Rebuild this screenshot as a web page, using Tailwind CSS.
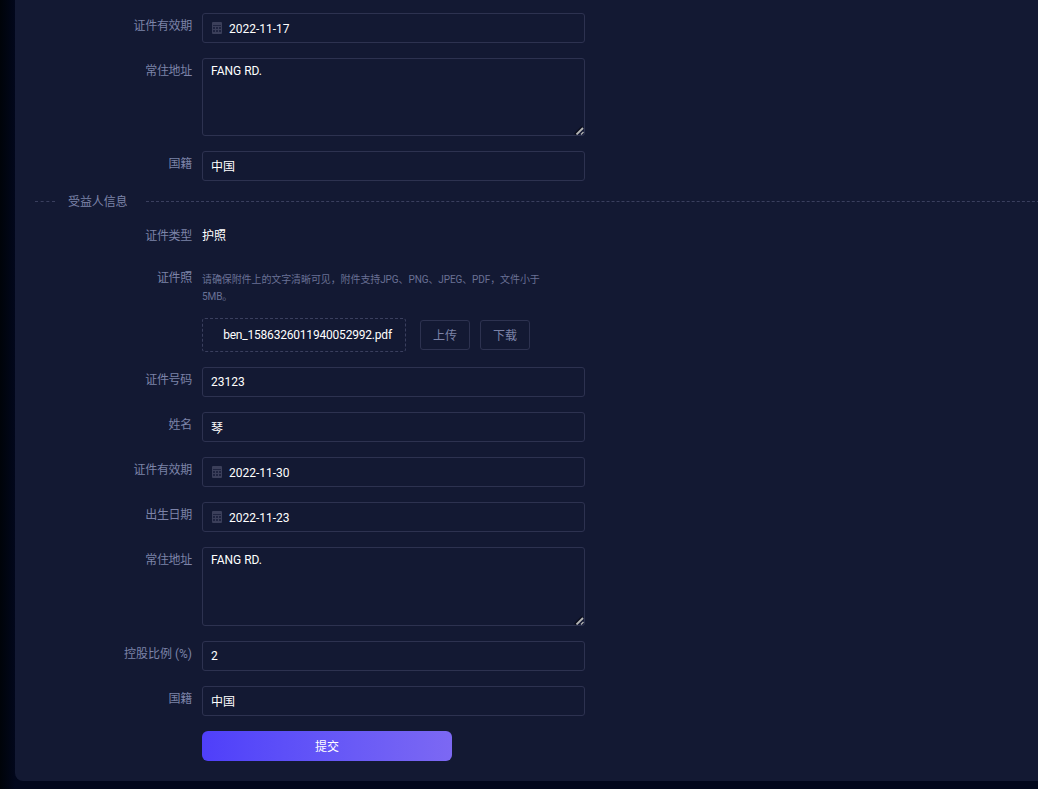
<!DOCTYPE html>
<html lang="en">
  <head>
    <meta charset="UTF-8" />
    <title>受益人信息</title>
    <script src="https://cdn.jsdelivr.net/npm/@tailwindcss/browser@4"></script>
  </head>
  <body class="bg-[#01051a] overflow-hidden font-['Roboto','Noto_Sans_CJK_SC',sans-serif]">
    <div class="h-[789px] w-[1038px] overflow-hidden bg-gradient-to-r from-[#000309] to-[#02071c] to-[15px]">
      <div class="ml-[15px] h-[781px] w-[1100px] rounded-bl-lg bg-[#131933] pt-[13px] text-xs">
        <!-- 企业信息 tail -->
        <div class="flex mb-[15px]">
          <label class="w-[177px] pt-[4px] text-right leading-[18px] tracking-[-0.3px] text-[#7c83a8]">证件有效期</label>
          <div class="ml-[10px] flex h-[30px] w-[383px] items-center rounded-[3px] border border-[#2d3250] pl-[8px] text-white">
            <svg class="h-3 w-3 mr-[6px]" viewBox="0 0 12 12"><rect x="1" y="0" width="10" height="12" rx="1" fill="#3b3f5a"/><path d="M2 3h8v1H2z" fill="#1f2440"/><path d="M2 5h2v2H2zM5 5h2v2H5zM8 5h2v2H8zM2 8h2v2H2zM5 8h2v2H5zM8 8h2v2H8z" fill="#1f2440"/></svg>
            <span class="pt-[2px]">2022-11-17</span>
          </div>
        </div>
        <div class="flex mb-[15px]">
          <label class="w-[177px] pt-[4px] text-right leading-[18px] tracking-[-0.3px] text-[#7c83a8]">常住地址</label>
          <div class="relative ml-[10px] h-[78px] w-[383px]">
            <textarea class="block h-full w-full resize-none rounded-[3px] border border-[#2d3250] bg-transparent px-[8px] pt-[3px] leading-[18px] text-white outline-none">FANG RD.</textarea>
            <svg class="absolute right-[1px] bottom-[1px] h-[10px] w-[10px]" viewBox="0 0 10 10"><path d="M1 9.500 8.500 2" stroke="#0a0d1c" stroke-width="2.500"/><path d="M2.500 9.500 9 3" stroke="#b5b5b5" stroke-width="1.800"/><path d="M7 9.500 9.500 7" stroke="#b5b5b5" stroke-width="1.300"/></svg>
          </div>
        </div>
        <div class="flex">
          <label class="w-[177px] pt-[4px] text-right leading-[18px] tracking-[-0.3px] text-[#7c83a8]">国籍</label>
          <input value="中国" class="ml-[10px] h-[30px] w-[383px] rounded-[3px] border border-[#2d3250] bg-transparent px-[8px] pb-[2px] text-white outline-none" />
        </div>

        <!-- 受益人信息 -->
        <div class="ml-[20px] mt-[12px] mb-[11px] flex h-[17px] items-center text-[#7c83a8]">
          <span class="w-[20px] border-t border-dashed border-[#3a3f5e]"></span>
          <span class="mx-[13px] pt-[2px] leading-[17px] tracking-[-0.1px]">受益人信息</span>
          <span class="flex-1 ml-[5px] border-t border-dashed border-[#3a3f5e]"></span>
        </div>

        <div class="flex mb-[14px] h-[30px] items-center">
          <label class="w-[177px] text-right leading-[18px] tracking-[-0.3px] text-[#7c83a8]">证件类型</label>
          <span class="ml-[10px] text-white">护照</span>
        </div>
        <div class="flex mb-[15px]">
          <label class="w-[177px] pt-[4px] text-right leading-[18px] tracking-[-0.3px] text-[#7c83a8]">证件照</label>
          <div class="ml-[10px] w-[345px]">
            <p class="pt-[6px] text-[10px] leading-[17px] tracking-[-0.1px] text-[#6a7195]">请确保附件上的文字清晰可见，附件支持JPG、PNG、JPEG、PDF，文件小于5MB。</p>
            <div class="mt-[13px] flex items-center">
              <div class="flex h-[34px] w-[204px] shrink-0 items-center justify-center rounded-[3px] border border-dashed border-[#3a3f5e] pl-[7px] tracking-[-0.2px] text-white">ben_1586326011940052992.pdf</div>
              <button class="ml-[14px] h-[30px] w-[50px] shrink-0 rounded-[3px] border border-[#2d3250] pt-[2px] text-[#7c83a8]">上传</button>
              <button class="ml-[10px] h-[30px] w-[50px] shrink-0 rounded-[3px] border border-[#2d3250] pt-[2px] text-[#7c83a8]">下载</button>
            </div>
          </div>
        </div>
        <div class="flex mb-[15px]">
          <label class="w-[177px] pt-[4px] text-right leading-[18px] tracking-[-0.3px] text-[#7c83a8]">证件号码</label>
          <input value="23123" class="ml-[10px] h-[30px] w-[383px] rounded-[3px] border border-[#2d3250] bg-transparent px-[8px] text-white outline-none" />
        </div>
        <div class="flex mb-[15px]">
          <label class="w-[177px] pt-[4px] text-right leading-[18px] tracking-[-0.3px] text-[#7c83a8]">姓名</label>
          <input value="琴" class="ml-[10px] h-[30px] w-[383px] rounded-[3px] border border-[#2d3250] bg-transparent px-[8px] text-white outline-none" />
        </div>
        <div class="flex mb-[15px]">
          <label class="w-[177px] pt-[4px] text-right leading-[18px] tracking-[-0.3px] text-[#7c83a8]">证件有效期</label>
          <div class="ml-[10px] flex h-[30px] w-[383px] items-center rounded-[3px] border border-[#2d3250] pl-[8px] text-white">
            <svg class="h-3 w-3 mr-[6px]" viewBox="0 0 12 12"><rect x="1" y="0" width="10" height="12" rx="1" fill="#3b3f5a"/><path d="M2 3h8v1H2z" fill="#1f2440"/><path d="M2 5h2v2H2zM5 5h2v2H5zM8 5h2v2H8zM2 8h2v2H2zM5 8h2v2H5zM8 8h2v2H8z" fill="#1f2440"/></svg>
            <span class="pt-[2px]">2022-11-30</span>
          </div>
        </div>
        <div class="flex mb-[15px]">
          <label class="w-[177px] pt-[4px] text-right leading-[18px] tracking-[-0.3px] text-[#7c83a8]">出生日期</label>
          <div class="ml-[10px] flex h-[30px] w-[383px] items-center rounded-[3px] border border-[#2d3250] pl-[8px] text-white">
            <svg class="h-3 w-3 mr-[6px]" viewBox="0 0 12 12"><rect x="1" y="0" width="10" height="12" rx="1" fill="#3b3f5a"/><path d="M2 3h8v1H2z" fill="#1f2440"/><path d="M2 5h2v2H2zM5 5h2v2H5zM8 5h2v2H8zM2 8h2v2H2zM5 8h2v2H5zM8 8h2v2H8z" fill="#1f2440"/></svg>
            <span class="pt-[2px]">2022-11-23</span>
          </div>
        </div>
        <div class="flex mb-[15px]">
          <label class="w-[177px] pt-[4px] text-right leading-[18px] tracking-[-0.3px] text-[#7c83a8]">常住地址</label>
          <div class="relative ml-[10px] h-[79px] w-[383px]">
            <textarea class="block h-full w-full resize-none rounded-[3px] border border-[#2d3250] bg-transparent px-[8px] pt-[3px] leading-[18px] text-white outline-none">FANG RD.</textarea>
            <svg class="absolute right-[1px] bottom-[1px] h-[10px] w-[10px]" viewBox="0 0 10 10"><path d="M1 9.500 8.500 2" stroke="#0a0d1c" stroke-width="2.500"/><path d="M2.500 9.500 9 3" stroke="#b5b5b5" stroke-width="1.800"/><path d="M7 9.500 9.500 7" stroke="#b5b5b5" stroke-width="1.300"/></svg>
          </div>
        </div>
        <div class="flex mb-[15px]">
          <label class="w-[177px] pt-[4px] text-right leading-[18px] text-[#7c83a8]">控股比例 (%)</label>
          <input value="2" class="ml-[10px] h-[30px] w-[383px] rounded-[3px] border border-[#2d3250] bg-transparent px-[8px] text-white outline-none" />
        </div>
        <div class="flex mb-[15px]">
          <label class="w-[177px] pt-[4px] text-right leading-[18px] tracking-[-0.3px] text-[#7c83a8]">国籍</label>
          <input value="中国" class="ml-[10px] h-[30px] w-[383px] rounded-[3px] border border-[#2d3250] bg-transparent px-[8px] pb-[2px] text-white outline-none" />
        </div>
        <div class="ml-[187px]">
          <button class="h-[30px] w-[250px] rounded-md bg-gradient-to-r from-[#4f3ffa] to-[#7c68f3] pt-[2px] text-white">提交</button>
        </div>
      </div>
    </div>
  </body>
</html>
